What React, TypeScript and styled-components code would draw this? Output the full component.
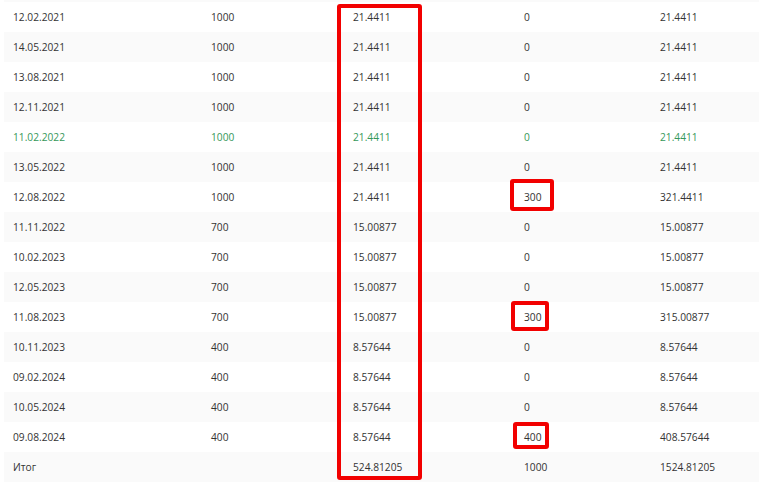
import React from "react";
import styled, { createGlobalStyle } from "styled-components";

const GlobalStyle = createGlobalStyle`
  html, body { margin: 0; padding: 0; background: #ffffff; }
  body { font-family: "Open Sans", "Liberation Sans", sans-serif; }
`;

const Page = styled.div`
  position: relative;
  width: 759px;
  height: 482px;
  overflow: hidden;
  background: #ffffff;
`;

const Table = styled.div`
  margin-left: 4px;
  border-top: 2px solid #fafafa;
  display: flex;
  flex-direction: column;
`;

const Row = styled.div<{ $green?: boolean }>`
  display: grid;
  grid-template-columns: 198px 142px 171px 136px 1fr;
  height: 30px;
  align-items: center;
  font-size: 10.2px;
  line-height: 14px;
  color: ${(p) => (p.$green ? "#36985a" : "#333333")};
  &:nth-child(even) { background: #fafafa; }
`;

const Cell = styled.div`
  padding-left: 9px;
  white-space: nowrap;
`;

const Marked = styled.span<{ $t: number; $r: number; $b: number; $l: number }>`
  position: relative;
  display: inline-block;
  &::after {
    content: "";
    position: absolute;
    top: ${(p) => -p.$t}px;
    right: ${(p) => -p.$r}px;
    bottom: ${(p) => -p.$b}px;
    left: ${(p) => -p.$l}px;
    border: 4px solid #f20000;
    border-radius: 3px;
  }
`;

const ColumnFrame = styled.div`
  position: absolute;
  left: 337px;
  top: 4px;
  width: 85px;
  height: 476px;
  box-sizing: border-box;
  border: 4px solid #f20000;
  border-radius: 3px;
  pointer-events: none;
`;

type Mark = { t: number; r: number; b: number; l: number };
type RowData = {
  date: string;
  amount: string;
  coupon: string;
  payment: string;
  total: string;
  green?: boolean;
  mark?: Mark;
};

const rows: RowData[] = [
  { date: "12.02.2021", amount: "1000", coupon: "21.4411", payment: "0", total: "21.4411" },
  { date: "14.05.2021", amount: "1000", coupon: "21.4411", payment: "0", total: "21.4411" },
  { date: "13.08.2021", amount: "1000", coupon: "21.4411", payment: "0", total: "21.4411" },
  { date: "12.11.2021", amount: "1000", coupon: "21.4411", payment: "0", total: "21.4411" },
  { date: "11.02.2022", amount: "1000", coupon: "21.4411", payment: "0", total: "21.4411", green: true },
  { date: "13.05.2022", amount: "1000", coupon: "21.4411", payment: "0", total: "21.4411" },
  { date: "12.08.2022", amount: "1000", coupon: "21.4411", payment: "300", total: "321.4411", mark: { t: 11, r: 13, b: 7, l: 14 } },
  { date: "11.11.2022", amount: "700", coupon: "15.00877", payment: "0", total: "15.00877" },
  { date: "10.02.2023", amount: "700", coupon: "15.00877", payment: "0", total: "15.00877" },
  { date: "12.05.2023", amount: "700", coupon: "15.00877", payment: "0", total: "15.00877" },
  { date: "11.08.2023", amount: "700", coupon: "15.00877", payment: "300", total: "315.00877", mark: { t: 9, r: 8, b: 7, l: 13 } },
  { date: "10.11.2023", amount: "400", coupon: "8.57644", payment: "0", total: "8.57644" },
  { date: "09.02.2024", amount: "400", coupon: "8.57644", payment: "0", total: "8.57644" },
  { date: "10.05.2024", amount: "400", coupon: "8.57644", payment: "0", total: "8.57644" },
  { date: "09.08.2024", amount: "400", coupon: "8.57644", payment: "400", total: "408.57644", mark: { t: 8, r: 8, b: 5, l: 11 } },
  { date: "Итог", amount: "", coupon: "524.81205", payment: "1000", total: "1524.81205" },
];

export default function App() {
  return (
    <Page>
      <GlobalStyle />
      <Table>
        {rows.map((r) => (
          <Row key={r.date} $green={r.green}>
            <Cell>{r.date}</Cell>
            <Cell>{r.amount}</Cell>
            <Cell>{r.coupon}</Cell>
            <Cell>
              {r.mark ? (
                <Marked $t={r.mark.t} $r={r.mark.r} $b={r.mark.b} $l={r.mark.l}>
                  {r.payment}
                </Marked>
              ) : (
                r.payment
              )}
            </Cell>
            <Cell>{r.total}</Cell>
          </Row>
        ))}
      </Table>
      <ColumnFrame />
    </Page>
  );
}
